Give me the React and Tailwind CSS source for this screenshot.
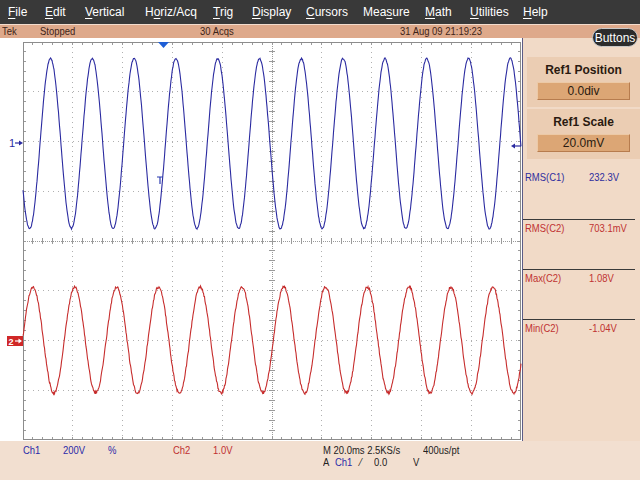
import React from 'react'

const X0 = 23
const W = 498
const Y0 = 4
const H = 398
const DX = W / 10
const DY = H / 8

const menu = [
  ['F', 'ile', 37],
  ['E', 'dit', 40],
  ['V', 'ertical', 60],
  ['H', 'o', 'riz/Acq', 68],
  ['T', 'rig', 39],
  ['D', 'isplay', 54],
  ['C', 'ursors', 57],
  ['Mea', 's', 'ure', 62],
  ['M', 'ath', 45],
  ['U', 'tilities', 53],
  ['H', 'elp', 40],
]

const measurements = [
  { label: 'RMS(C1)', value: '232.3V', color: 'text-[#2e2e9e]' },
  { label: 'RMS(C2)', value: '703.1mV', color: 'text-[#c03232]' },
  { label: 'Max(C2)', value: '1.08V', color: 'text-[#c03232]' },
  { label: 'Min(C2)', value: '-1.04V', color: 'text-[#c03232]' },
]

function noise(i, seed) {
  const s = Math.sin(i * 12.9898 + seed * 78.233) * 43758.5453
  return s - Math.floor(s) - 0.5
}

function wave(center, amp, peakX, period, jitter, seed) {
  let d = ''
  for (let x = X0; x <= X0 + W; x += 0.5) {
    const y = center - amp * Math.cos((2 * Math.PI * (x - peakX)) / period) + noise(x * 2, seed) * jitter
    d += (x === X0 ? 'M' : 'L') + x + ' ' + y.toFixed(1)
  }
  return d
}

function MenuItem({ item }) {
  // item: [before, underlined, after, width] or [underlined, after, width]
  let before = ''
  let u
  let after
  let w
  if (item.length === 4) {
    ;[before, u, after, w] = item
  } else {
    ;[u, after, w] = item
  }
  return (
    <div style={{ width: w }} className="shrink-0 whitespace-nowrap">
      {before}
      <span className="underline underline-offset-2">{u}</span>
      {after}
    </div>
  )
}

function Graticule() {
  const els = []
  const minorX = DX / 5
  const minorY = DY / 5

  // dotted grid lines
  for (let i = 1; i < 10; i++) {
    if (i === 5) continue
    const x = X0 + i * DX
    els.push(
      <line key={'v' + i} x1={x} y1={Y0} x2={x} y2={Y0 + H} stroke="#b0b0b0" strokeDasharray={`1 ${minorY / 2 - 1}`} />
    )
  }
  for (let j = 1; j < 8; j++) {
    if (j === 4) continue
    const y = Y0 + j * DY
    els.push(
      <line key={'h' + j} x1={X0} y1={y} x2={X0 + W} y2={y} stroke="#b0b0b0" strokeDasharray={`1 ${minorX / 2 - 1}`} />
    )
  }

  // center axes with ticks
  const cx = X0 + 5 * DX
  const cy = Y0 + 4 * DY
  els.push(<line key="cx" x1={cx} y1={Y0} x2={cx} y2={Y0 + H} stroke="#9a9a9a" strokeDasharray="1 1" />)
  els.push(<line key="cy" x1={X0} y1={cy} x2={X0 + W} y2={cy} stroke="#9a9a9a" strokeDasharray="1 1" />)
  for (let k = 1; k < 50; k++) {
    const x = X0 + k * minorX
    els.push(<line key={'tx' + k} x1={x} y1={cy - 3} x2={x} y2={cy + 3} stroke="#9a9a9a" />)
    els.push(<line key={'tt' + k} x1={x} y1={Y0} x2={x} y2={Y0 + 3} stroke="#9a9a9a" />)
    els.push(<line key={'tb' + k} x1={x} y1={Y0 + H - 3} x2={x} y2={Y0 + H} stroke="#9a9a9a" />)
  }
  for (let k = 1; k < 40; k++) {
    const y = Y0 + k * minorY
    els.push(<line key={'ty' + k} x1={cx - 3} y1={y} x2={cx + 3} y2={y} stroke="#9a9a9a" />)
    els.push(<line key={'tl' + k} x1={X0} y1={y} x2={X0 + 3} y2={y} stroke="#9a9a9a" />)
    els.push(<line key={'tr' + k} x1={X0 + W - 3} y1={y} x2={X0 + W} y2={y} stroke="#9a9a9a" />)
  }

  els.push(
    <rect key="frame" x={X0 + 0.5} y={Y0 + 0.5} width={W - 1} height={H - 1} fill="none" stroke="#8c8c8c" />
  )
  return <g shapeRendering="crispEdges">{els}</g>
}

function Display() {
  return (
    <svg width="522" height="403" className="block">
      <Graticule />
      <path d={wave(105.5, 85, 50.5, 41.8, 1.4, 1)} stroke="#2a2aa0" strokeWidth="1.1" fill="none" />
      <path d={wave(302, 53, 33, 41.8, 2.6, 2)} stroke="#c62c2c" strokeWidth="1.1" fill="none" />

      {/* ch1 ground marker */}
      <text x="9" y="109" fontSize="11" fill="#2a2aa0" fontFamily="Liberation Sans, sans-serif">1</text>
      <line x1="15" y1="105" x2="20" y2="105" stroke="#2a2aa0" strokeWidth="1.2" />
      <polygon points="23,105 19,102.5 19,107.5" fill="#2a2aa0" />

      {/* ch2 ground marker */}
      <rect x="7" y="298" width="16" height="10" fill="#d02828" />
      <text x="8.5" y="306.5" fontSize="9" fontWeight="bold" fill="#fff" fontFamily="Liberation Sans, sans-serif">2</text>
      <line x1="15" y1="303" x2="19" y2="303" stroke="#fff" strokeWidth="1.2" />
      <polygon points="22,303 18.5,300.5 18.5,305.5" fill="#fff" />

      {/* trigger position */}
      <polygon points="158,4 169,4 163.5,10" fill="#1f5fd6" />
      {/* trigger point */}
      <path d="M157 139 H163 M160 139 V146" stroke="#2a3ab0" strokeWidth="1.2" fill="none" />
      {/* trigger level */}
      <line x1="514" y1="108" x2="521" y2="108" stroke="#2a2aa0" strokeWidth="1.2" />
      <polygon points="511,108 515,105.5 515,110.5" fill="#2a2aa0" />
    </svg>
  )
}

function RefBox({ title, value }) {
  return (
    <div className="ml-[4px] h-[50px] bg-[#ebcdb3] flex flex-col items-center">
      <div className="mt-[6px] h-[15px] leading-[15px] text-[12px] font-bold text-[#2a1a10]">{title}</div>
      <div className="mt-[4px] w-[93px] h-[18px] bg-[#dca675] border border-[#b77c4e] border-t-[#ecc9a6] border-l-[#ecc9a6] flex items-center justify-center text-[12px] text-[#2a1a10]">
        {value}
      </div>
    </div>
  )
}

function Narrow({ children, className = '', w }) {
  return (
    <div style={{ width: w }} className={'shrink-0 whitespace-nowrap ' + className}>
      <span className="inline-block origin-left scale-x-[0.86]">{children}</span>
    </div>
  )
}

export default function App() {
  return (
    <div className="relative w-[640px] h-[480px] overflow-hidden bg-white flex flex-col font-['Liberation_Sans',Arial,sans-serif]">
      {/* menu bar */}
      <div className="h-[24px] bg-[#393939] text-white text-[12px] flex items-center pl-[8px]">
        {menu.map((m, i) => (
          <MenuItem key={i} item={m} />
        ))}
      </div>
      <div className="h-[1px] bg-[#f3dccd]" />

      {/* status bar */}
      <div className="h-[13px] bg-[#dea98b] text-[#3d2418] text-[11px] leading-[13px] flex pl-[2px]">
        <Narrow w={38}>Tek</Narrow>
        <Narrow w={160}>Stopped</Narrow>
        <Narrow w={200}>30 Acqs</Narrow>
        <Narrow w={120}>31 Aug 09 21:19:23</Narrow>
      </div>

      {/* main area */}
      <div className="h-[403px] flex">
        <div className="w-[522px] bg-white">
          <Display />
        </div>
        <div className="w-[118px] bg-[#f1dac7] border-l border-[#5c5c86] flex flex-col">
          <div className="h-[19px]" />
          <RefBox title="Ref1 Position" value="0.0div" />
          <div className="h-[2px]" />
          <RefBox title="Ref1 Scale" value="20.0mV" />
          <div className="h-[10px]" />
          <div className="flex flex-col text-[11px]">
            {measurements.map((m, i) => (
              <div
                key={m.label}
                className={'h-[50px] flex pl-[2px] ' + (i > 0 ? 'border-t border-[#3a3a3a] mr-[5px] ' : '') + m.color}
              >
                <Narrow w={64}>{m.label}</Narrow>
                <Narrow w={48}>{m.value}</Narrow>
              </div>
            ))}
          </div>
        </div>
      </div>

      {/* bottom readout */}
      <div className="h-[39px] bg-[#f2dfd0] text-[11px] leading-[12px] flex pt-[3px]">
        <div className="flex pl-[23px] w-[323px] text-[#2a2aa8]">
          <Narrow w={40}>Ch1</Narrow>
          <Narrow w={45}>200V</Narrow>
          <Narrow w={65}>%</Narrow>
          <Narrow w={40} className="text-[#c03030]">Ch2</Narrow>
          <Narrow w={40} className="text-[#c03030]">1.0V</Narrow>
        </div>
        <div className="flex flex-col text-[#222]">
          <div className="flex">
            <Narrow w={100}>M 20.0ms 2.5KS/s</Narrow>
            <Narrow w={60}>400us/pt</Narrow>
          </div>
          <div className="flex">
            <Narrow w={12}>A</Narrow>
            <Narrow w={25} className="text-[#2a2aa8]">Ch1</Narrow>
            <Narrow w={14}>⁄</Narrow>
            <Narrow w={39}>0.0</Narrow>
            <Narrow w={20}>V</Narrow>
          </div>
        </div>
      </div>

      {/* Buttons pill */}
      <div className="absolute left-[592px] top-[28px] w-[46px] h-[19px] rounded-[10px] bg-[#2c2c2c] border border-[#c8c8c8] text-white text-[12px] flex items-center justify-center">
        Buttons
      </div>
    </div>
  )
}
